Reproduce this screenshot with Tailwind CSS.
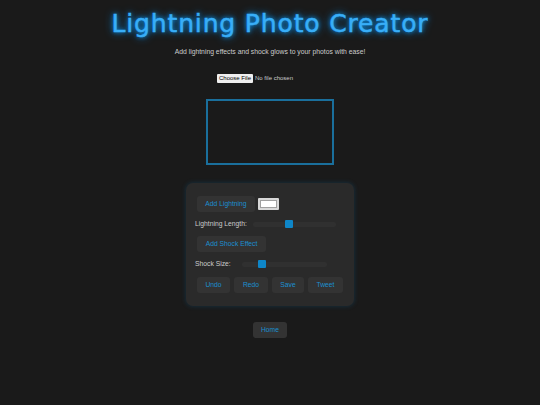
<!DOCTYPE html>
<html>

<head>
    <meta charset="utf-8">
    <meta name="viewport" content="width=device-width, initial-scale=1">
    <title>Lightning Photo Creator</title>
    <script src="https://cdn.jsdelivr.net/npm/@tailwindcss/browser@4"></script>
</head>

<body class="h-[405px] overflow-hidden bg-[#1a1a1a] font-['Liberation_Sans',Arial,sans-serif] text-[#cccccc]">

    <div class="flex flex-col items-center pt-[9px]">
        <h1 class="h-[30px] whitespace-nowrap font-['DejaVu_Sans',sans-serif] text-[25px] leading-[30px] tracking-[0.85px] text-[#38aef8] [-webkit-text-stroke:0.5px_#38aef8] [text-shadow:0_0_8px_#0a8fe8,0_0_4px_#0a8fe8]">Lightning Photo Creator</h1>

        <p class="mt-[8px] h-[10px] text-[6.8px] leading-[10px]">Add lightning effects and shock glows to your photos with ease!</p>

        <!-- file picker -->
        <input type="file" class="mt-[17px] h-[9px] w-[106px] text-[6px] leading-[9px] file:mr-[2px] file:h-[9px] file:w-[36px] file:rounded-[1px] file:border-0 file:bg-[#efefef] file:text-[6px] file:text-black">

        <div class="mt-[16px] h-[66px] w-[128px] border-2 border-[#1a6f9c] bg-[#1a1a1a]"></div>

        <!-- controls -->
        <div class="mt-[18px] flex h-[123px] w-[168px] flex-col rounded-[7px] bg-[#2a2a2a] px-[9px] pt-[13px] text-[6.75px] shadow-[0_0_5px_rgba(14,110,170,0.3)]">
            <div class="flex items-center pl-[2px]">
                <button class="h-[16px] w-[58px] rounded-[3px] bg-[#333333] text-[#1b8fd0]">Add Lightning</button>
                <div class="ml-[3px] flex h-[12px] w-[21px] items-center justify-center rounded-[1px] border-2 border-[#d8d8d8] bg-[#a0a0a0]">
                    <div class="h-[6px] w-[15px] bg-white"></div>
                </div>
            </div>

            <div class="mt-[6px] flex h-[12px] items-center">
                <label class="whitespace-nowrap">Lightning Length:</label>
                <input type="range" value="43" class="ml-[6px] h-[5px] w-[83px] appearance-none rounded-[2px] bg-[#303030] [&::-webkit-slider-thumb]:h-[8px] [&::-webkit-slider-thumb]:w-[8px] [&::-webkit-slider-thumb]:appearance-none [&::-webkit-slider-thumb]:rounded-[1px] [&::-webkit-slider-thumb]:bg-[#0e86c8]">
            </div>

            <button class="mt-[6px] ml-[2px] h-[16px] w-[69px] rounded-[3px] bg-[#333333] text-[#1b8fd0]">Add Shock Effect</button>

            <div class="mt-[6px] flex h-[12px] items-center">
                <label class="whitespace-nowrap">Shock Size:</label>
                <input type="range" value="21" class="ml-[11px] h-[5px] w-[85px] appearance-none rounded-[2px] bg-[#303030] [&::-webkit-slider-thumb]:h-[8px] [&::-webkit-slider-thumb]:w-[8px] [&::-webkit-slider-thumb]:appearance-none [&::-webkit-slider-thumb]:rounded-[1px] [&::-webkit-slider-thumb]:bg-[#0e86c8]">
            </div>

            <div class="mt-[7px] ml-[2px] flex gap-[4px]">
                <button class="h-[16px] w-[33px] rounded-[3px] bg-[#333333] text-[#1b8fd0]">Undo</button>
                <button class="h-[16px] w-[34px] rounded-[3px] bg-[#333333] text-[#1b8fd0]">Redo</button>
                <button class="h-[16px] w-[32px] rounded-[3px] bg-[#333333] text-[#1b8fd0]">Save</button>
                <button class="h-[16px] w-[35px] rounded-[3px] bg-[#333333] text-[#1b8fd0]">Tweet</button>
            </div>
        </div>

        <button class="mt-[16px] h-[16px] w-[34px] rounded-[3px] bg-[#333333] text-[6.75px] text-[#1b8fd0]">Home</button>
    </div>

</body>

</html>
